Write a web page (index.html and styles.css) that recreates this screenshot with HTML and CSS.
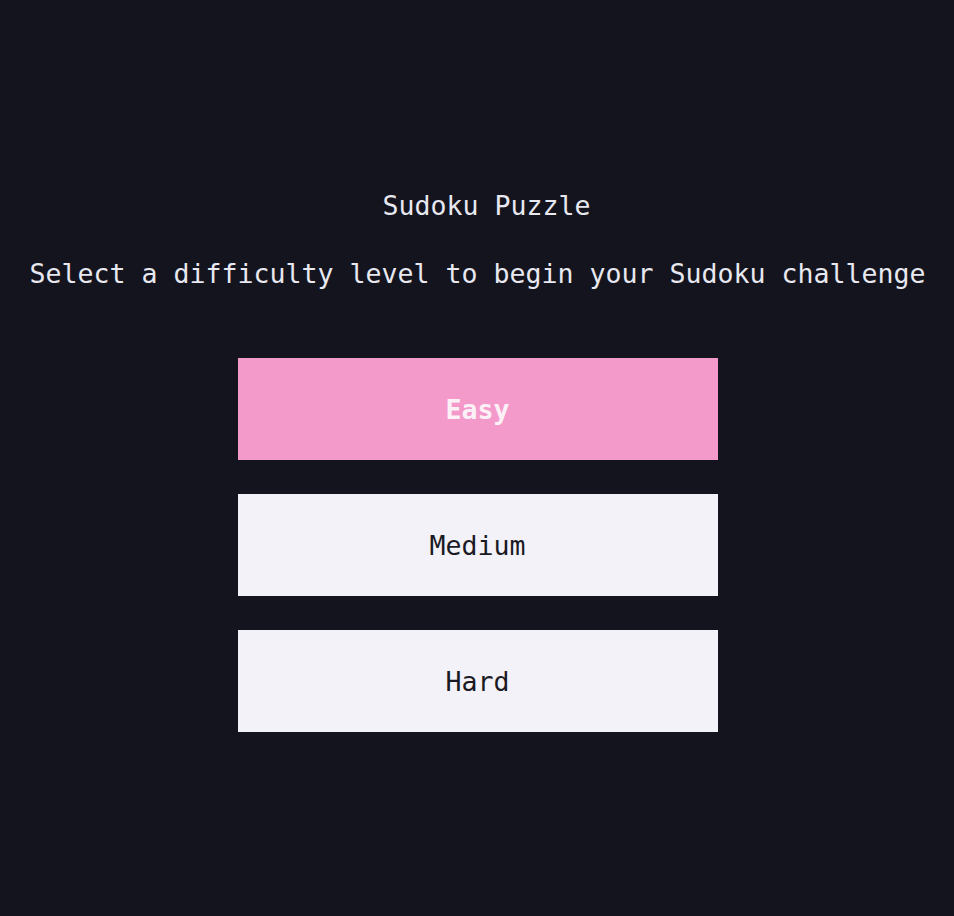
FILE: index.html
```html
<!DOCTYPE html>
<html lang="en">
<head>
<meta charset="utf-8">
<title>Sudoku Puzzle</title>
<link rel="stylesheet" href="styles.css">
</head>
<body>
<main class="screen">
  <h1 class="title">Sudoku Puzzle</h1>
  <p class="subtitle">Select a difficulty level to begin your Sudoku challenge</p>
  <div class="levels">
    <button class="level level-active">Easy</button>
    <button class="level">Medium</button>
    <button class="level">Hard</button>
  </div>
</main>
</body>
</html>
```
FILE: styles.css
```css
html, body {
  margin: 0;
  padding: 0;
  background: #14141e;
}
body {
  font-family: "DejaVu Sans Mono", monospace;
  font-size: 26.58px;
  line-height: 32px;
  color: #e8e8f0;
}
.screen {
  display: flex;
  flex-direction: column;
  align-items: center;
  padding-top: 190px;
  padding-left: 1px;
}
.title {
  margin: 0;
  font-size: inherit;
  font-weight: normal;
  padding-left: 18px;
}
.subtitle {
  margin: 36px 0 0;
}
.levels {
  margin-top: 68px;
  display: flex;
  flex-direction: column;
  gap: 34px;
  width: 480px;
}
.level {
  height: 102px;
  border: none;
  border-radius: 0;
  background: #f3f2f8;
  color: #1a1a24;
  font-family: inherit;
  font-size: inherit;
  line-height: 32px;
  padding: 2px 0 0;
  cursor: pointer;
}
.level-active {
  background: #f49aca;
  color: #fdf1f8;
  font-weight: bold;
}
```
